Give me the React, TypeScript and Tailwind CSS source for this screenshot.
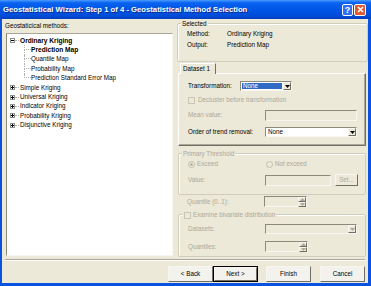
import React from "react";

const sunken =
  "border border-t-[#8d8a7c] border-l-[#8d8a7c] border-b-[#f7f6f1] border-r-[#f7f6f1]";
const raised =
  "border border-t-[#f7f6f1] border-l-[#f7f6f1] border-b-[#716f64] border-r-[#716f64]";

function Tri({ up, dim }: { up?: boolean; dim?: boolean }) {
  return (
    <svg width="5" height="3" viewBox="0 0 5 3">
      <path d={up ? "M0 3h5L2.5 0z" : "M0 0h5L2.5 3z"} fill={dim ? "#aca899" : "#000"} />
    </svg>
  );
}

function Combo({
  width,
  text,
  highlight,
  disabled,
}: {
  width: string;
  text?: string;
  highlight?: boolean;
  disabled?: boolean;
}) {
  return (
    <div className={`flex h-[10px] ${width} ${sunken} ${disabled ? "bg-[#ece9d8]" : "bg-white"}`}>
      <div className="flex flex-1 items-stretch p-[1px]">
        {text && (
          <span
            className={`flex flex-1 items-center pl-[1px] leading-[8px] ${
              highlight ? "bg-[#316ac5] text-white" : "text-black"
            }`}
          >
            {text}
          </span>
        )}
      </div>
      <div className={`flex w-[8px] items-center justify-center bg-[#ece9d8] ${raised}`}>
        <Tri dim={disabled} />
      </div>
    </div>
  );
}

function TextBox({ width }: { width: string }) {
  return <div className={`h-[11px] ${width} ${sunken} bg-[#ece9d8]`} />;
}

function Spin() {
  return (
    <div className={`flex h-[11px] w-[43px] ${sunken} bg-[#ece9d8]`}>
      <div className="flex-1" />
      <div className="flex w-[8px] flex-col">
        <div className={`flex flex-1 items-center justify-center ${raised}`}>
          <Tri up dim />
        </div>
        <div className={`flex flex-1 items-center justify-center ${raised}`}>
          <Tri dim />
        </div>
      </div>
    </div>
  );
}

function Check({ dim }: { dim?: boolean }) {
  return (
    <div
      className={`h-[7px] w-[7px] shrink-0 border ${
        dim ? "border-[#c9c6b6] bg-[#ece9d8]" : "border-[#1c5180] bg-white"
      }`}
    />
  );
}

function Radio({ on }: { on?: boolean }) {
  return (
    <svg width="7" height="7" viewBox="0 0 7 7" className="shrink-0">
      <circle cx="3.5" cy="3.5" r="3" fill="#ece9d8" stroke="#c2bfb0" />
      {on && <circle cx="3.5" cy="3.5" r="1.2" fill="#aca899" />}
    </svg>
  );
}

function Expander({ plus }: { plus?: boolean }) {
  return (
    <svg width="5" height="5" viewBox="0 0 5 5" className="shrink-0">
      <rect x="0.5" y="0.5" width="4" height="4" fill="#fff" stroke="#8e8f8f" />
      <path d="M1 2.5h3" stroke="#000" />
      {plus && <path d="M2.5 1v3" stroke="#000" />}
    </svg>
  );
}

function RootRow({ label, open, bold }: { label: string; open?: boolean; bold?: boolean }) {
  return (
    <div className="flex h-[9.4px] items-center pl-[3px]">
      <Expander plus={!open} />
      <div className="mr-[1px] w-[4px] border-t border-dotted border-[#b0b0b0]" />
      <span className={bold ? "text-[6.6px] font-bold" : ""}>{label}</span>
    </div>
  );
}

function ChildRow({ label, last, bold }: { label: string; last?: boolean; bold?: boolean }) {
  return (
    <div className="flex h-[9.4px] items-stretch pl-[17px]">
      <div className="flex w-[7px] flex-col">
        <div className="h-1/2 border-b border-l border-dotted border-[#b0b0b0]" />
        <div className={`h-1/2 ${last ? "" : "border-l border-dotted border-[#b0b0b0]"}`} />
      </div>
      <span className={`flex items-center ${bold ? "text-[6.6px] font-bold" : ""}`}>{label}</span>
    </div>
  );
}

function Legend({ children, left = "left-[3px]" }: { children: React.ReactNode; left?: string }) {
  return (
    <div
      className={`absolute top-[-5px] ${left} flex h-[10px] items-center gap-[2px] bg-[#ece9d8] px-[1px] leading-[10px]`}
    >
      {children}
    </div>
  );
}

function Btn({ label, def, className = "" }: { label: string; def?: boolean; className?: string }) {
  return (
    <div
      className={`flex h-[16px] w-[45px] items-center justify-center bg-[#f3f2ec] ${
        def ? "border border-[#000]" : ""
      } ${className}`}
    >
      <div className={`flex h-full w-full items-center justify-center ${raised}`}>{label}</div>
    </div>
  );
}

export default function App() {
  return (
    <div className="flex h-[286px] w-[371px] flex-col bg-[#0a53e0] font-['Liberation_Sans',Arial,sans-serif] text-[6.3px] leading-[10px] text-black">
      {/* title bar */}
      <div className="flex h-[19px] items-center bg-[linear-gradient(to_bottom,#4a9cff_0%,#0a62f0_15%,#0056e6_50%,#004bd8_85%,#003fb8_100%)] pl-[3px] pr-[5px]">
        <span className="flex-1 text-[7.7px] font-bold text-white [text-shadow:1px_1px_0_#0a2a8a]">
          Geostatistical Wizard: Step 1 of 4 - Geostatistical Method Selection
        </span>
        <div className="flex h-[12px] w-[11px] items-center justify-center rounded-[2px] border border-white bg-[#2f6ff2] text-[9px] font-bold text-white">
          ?
        </div>
        <div className="ml-[1px] flex h-[12px] w-[12px] items-center justify-center rounded-[2px] border border-white bg-[#df5a2e]">
          <svg width="7" height="7" viewBox="0 0 7 7">
            <path d="M1 1l5 5M6 1L1 6" stroke="#fff" strokeWidth="1.6" />
          </svg>
        </div>
      </div>

      {/* body */}
      <div className="mb-[3px] ml-[2px] mr-[3px] flex flex-1 flex-col bg-[#ece9d8]">
        <div className="flex h-[238px] pl-[3px]">
          {/* left column */}
          <div className="flex w-[168px] flex-col pt-[2px]">
            <div className="h-[10px]">Geostaticical methods:</div>
            <div className={`ml-[1px] mt-[2px] h-[223px] ${sunken} border-l-[#6f6d61] border-t-[#a9a699] bg-white pt-[2px]`}>
              <RootRow label="Ordinary Kriging" open bold />
              <ChildRow label="Prediction Map" bold />
              <ChildRow label="Quantile Map" />
              <ChildRow label="Probability Map" />
              <ChildRow label="Prediction Standard Error Map" last />
              <RootRow label="Simple Kriging" />
              <RootRow label="Universal Kriging" />
              <RootRow label="Indicator Kriging" />
              <RootRow label="Probability Kriging" />
              <RootRow label="Disjunctive Kriging" />
            </div>
          </div>

          {/* right column */}
          <div className="ml-[4px] flex w-[191px] flex-col pt-[4px]">
            {/* Selected */}
            <div className="relative h-[39px] rounded-[2px] border border-[#d0cdbd] pl-[9px] pt-[4px] leading-[11px] shadow-[inset_1px_1px_0_#fff]">
              <Legend>Selected</Legend>
              <div className="flex">
                <span className="w-[40px]">Method:</span>
                <span>Ordinary Kriging</span>
              </div>
              <div className="flex">
                <span className="w-[40px]">Output:</span>
                <span>Prediction Map</span>
              </div>
            </div>

            {/* tab */}
            <div className="ml-[1px] mr-[2px] mt-[1px] flex flex-col">
              <div className="relative z-10 ml-[2px] -mb-[1px] flex h-[11px] w-[36px] items-center border border-b-0 border-l-[#fff] border-r-[#716f64] border-t-[#fff] bg-[#ece9d8] pl-[2px]">
                Dataset 1
              </div>
              <div className="flex h-[73px] flex-col border border-b-[#716f64] border-l-[#fff] border-r-[#716f64] border-t-[#fff] pl-[9px] pt-[7px] shadow-[inset_-1px_-1px_0_#aca899]">
                <div className="flex h-[10px] items-center">
                  <span className="w-[52px]">Transformation:</span>
                  <Combo width="w-[52px]" text="None" highlight />
                </div>
                <div className="mt-[4px] flex h-[10px] items-center gap-[3px] text-[#aca899]">
                  <Check dim />
                  <span>Decluster before transformation</span>
                </div>
                <div className="mt-[5px] flex h-[10px] items-center text-[#aca899]">
                  <span className="w-[77px]">Mean value:</span>
                  <TextBox width="w-[92px]" />
                </div>
                <div className="mt-[7px] flex h-[10px] items-center">
                  <span className="w-[77px]">Order of trend removal:</span>
                  <Combo width="w-[92px]" text="None" />
                </div>
              </div>

              {/* Primary Threshold */}
              <div className="relative mt-[7px] h-[42px] rounded-[2px] border border-[#d0cdbd] pl-[9px] pt-[5px] text-[#aca899] shadow-[inset_1px_1px_0_#fff]">
                <Legend>Primary Threshold</Legend>
                <div className="flex h-[10px] items-center">
                  <div className="flex w-[78px] items-center gap-[2px]">
                    <Radio on />
                    <span>Exceed</span>
                  </div>
                  <div className="flex items-center gap-[2px]">
                    <Radio />
                    <span>Not exceed</span>
                  </div>
                </div>
                <div className="mt-[5px] flex h-[12px] items-center">
                  <span className="w-[77px]">Value:</span>
                  <TextBox width="w-[66px]" />
                  <div className={`ml-[4px] flex h-[12px] w-[23px] items-center justify-center ${raised}`}>
                    Set...
                  </div>
                </div>
              </div>

              {/* Quantile */}
              <div className="mt-[1px] flex h-[11px] items-center pl-[9px] text-[#aca899]">
                <span className="w-[77px]">Quantile (0..1):</span>
                <Spin />
              </div>

              {/* Examine bivariate */}
              <div className="relative mt-[7px] h-[43px] rounded-[2px] border border-[#d0cdbd] pl-[9px] pt-[9px] text-[#aca899] shadow-[inset_1px_1px_0_#fff]">
                <Legend left="left-[4px]">
                  <Check dim />
                  <span>Examine bivariate distribution</span>
                </Legend>
                <div className="flex h-[10px] items-center">
                  <span className="w-[77px]">Datasets:</span>
                  <Combo width="w-[92px]" disabled />
                </div>
                <div className="mt-[7px] flex h-[11px] items-center">
                  <span className="w-[77px]">Quantiles:</span>
                  <Spin />
                </div>
              </div>
            </div>
          </div>
        </div>

        {/* separator */}
        <div className="ml-[3px] mr-[3px] mt-[2px] h-[2px] border-b border-t border-b-white border-t-[#aca899]" />

        {/* buttons */}
        <div className="mt-[5px] flex pr-[3px]">
          <div className="flex-1" />
          <Btn label="< Back" />
          <Btn label="Next >" def />
          <Btn label="Finish" className="ml-[8px]" />
          <Btn label="Cancel" className="ml-[9px]" />
        </div>
      </div>
    </div>
  );
}
